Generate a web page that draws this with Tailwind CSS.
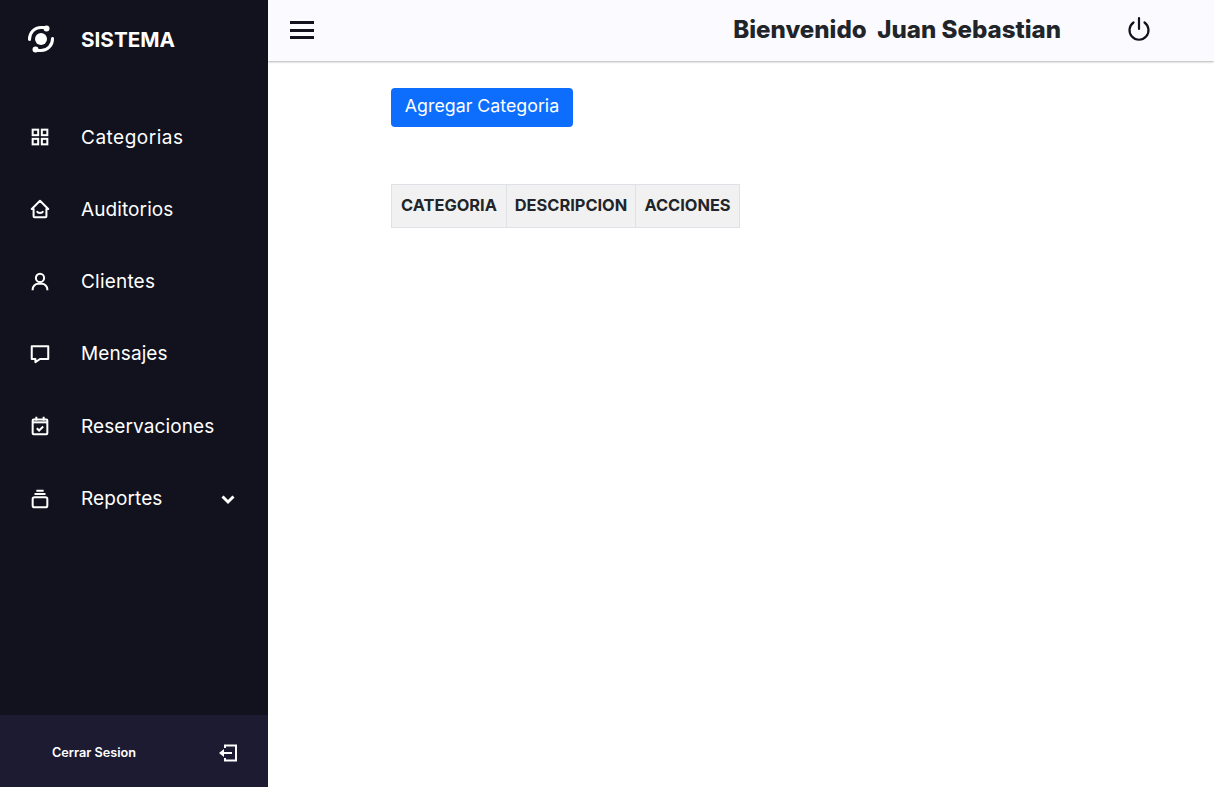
<!DOCTYPE html>
<html lang="en">

<head>
  <meta charset="UTF-8" />
  <title>Sistema</title>
  <script src="https://cdn.jsdelivr.net/npm/@tailwindcss/browser@4"></script>
</head>

<body class="bg-white font-['Inter',sans-serif]">
  <div class="flex h-[787px] w-[1214px] overflow-hidden">
    <!-- Sidebar -->
    <aside class="flex w-[268px] shrink-0 flex-col bg-[#11121d] text-white">
      <div class="flex h-[78px] items-center">
        <div class="flex w-[81px] justify-center">
          <svg class="h-[28px] w-[28px]" viewBox="0 0 28 28" fill="none" stroke="white" stroke-width="3" stroke-linecap="round">
            <circle cx="14" cy="14" r="6" fill="white" stroke="none" />
            <path d="M2.500 14.500A11.500 11.500 0 0 1 14 2.500h3" />
            <path d="M25.500 13.500A11.500 11.500 0 0 1 14 25.500h-3" />
            <circle cx="19.500" cy="3.500" r="3" fill="white" stroke="none" />
            <circle cx="8.500" cy="24.500" r="3" fill="white" stroke="none" />
          </svg>
        </div>
        <span class="pt-[2px] text-[20.700px] font-bold">SISTEMA</span>
      </div>

      <nav class="mt-[23px] flex flex-1 flex-col">
        <a href="#" class="flex h-[72.300px] items-center">
          <div class="flex w-[81px] justify-center pr-px">
            <svg class="h-[22px] w-[22px]" viewBox="0 0 24 24" fill="none" stroke="white" stroke-width="2.200">
              <rect x="4" y="4" width="6" height="6" />
              <rect x="14" y="4" width="6" height="6" />
              <rect x="4" y="14" width="6" height="6" />
              <rect x="14" y="14" width="6" height="6" />
            </svg>
          </div>
          <span class="pt-[3px] text-[19px] tracking-[0.5px]">Categorias</span>
        </a>
        <a href="#" class="flex h-[72.300px] items-center">
          <div class="flex w-[81px] justify-center pr-px">
            <svg class="h-[22px] w-[22px]" viewBox="0 0 24 24" fill="none" stroke="white" stroke-width="2.200" stroke-linejoin="round">
              <path d="M3 12l9-9 9 9h-2v8a1 1 0 0 1-1 1H6a1 1 0 0 1-1-1v-8z" />
              <path d="M8.500 14.500c1.500 2.500 5.500 2.500 7 0" />
            </svg>
          </div>
          <span class="pt-px text-[19px] tracking-[0.1px]">Auditorios</span>
        </a>
        <a href="#" class="flex h-[72.300px] items-center">
          <div class="flex w-[81px] justify-center pr-px">
            <svg class="h-[22px] w-[22px]" viewBox="0 0 24 24" fill="none" stroke="white" stroke-width="2.200">
              <circle cx="12" cy="7.500" r="4.500" />
              <path d="M4 21v-1a6 6 0 0 1 6-6h4a6 6 0 0 1 6 6v1" />
            </svg>
          </div>
          <span class="pt-px text-[19px] tracking-[0.2px]">Clientes</span>
        </a>
        <a href="#" class="flex h-[72.300px] items-center">
          <div class="flex w-[81px] justify-center pr-px">
            <svg class="h-[22px] w-[22px]" viewBox="0 0 24 24" fill="none" stroke="white" stroke-width="2.200" stroke-linejoin="round">
              <path d="M3 3.500h18v14h-9l-5 3.500v-3.500H3z" />
            </svg>
          </div>
          <span class="text-[19px] tracking-[0.1px]">Mensajes</span>
        </a>
        <a href="#" class="flex h-[72.300px] items-center">
          <div class="flex w-[81px] justify-center pr-px">
            <svg class="h-[22px] w-[22px]" viewBox="0 0 24 24" fill="none" stroke="white" stroke-width="2.200">
              <rect x="4" y="5" width="16" height="16" rx="1" />
              <path d="M8 2v4M16 2v4" />
              <path d="M4 8h16" />
              <path d="M8.500 14.500l2.500 2.500 4.500-4.500" />
            </svg>
          </div>
          <span class="pt-px text-[19px] tracking-[0.1px]">Reservaciones</span>
        </a>
        <a href="#" class="flex h-[72.300px] items-center">
          <div class="flex w-[81px] justify-center pr-px">
            <svg class="h-[22px] w-[22px]" viewBox="0 0 24 24" fill="none" stroke="white" stroke-width="2.200">
              <rect x="4" y="10" width="16" height="11" rx="2" />
              <path d="M6 6.500h12M8 3h8" />
            </svg>
          </div>
          <span class="pt-px text-[19px] tracking-[0.1px]">Reportes</span>
          <svg class="ml-auto mr-[31px] h-[18px] w-[18px]" viewBox="0 0 18 18" fill="none" stroke="white" stroke-width="3">
            <path d="M3.500 6.500L9 12l5.500-5.500" />
          </svg>
        </a>
      </nav>

      <!-- Footer -->
      <div class="flex h-[72px] items-center bg-[#1d1b31] pl-[52px] pr-[30px]">
        <span class="pt-[3px] text-[12.700px] font-semibold">Cerrar Sesion</span>
        <svg class="ml-auto mt-[3px] h-[20px] w-[20px]" viewBox="0 0 20 20" fill="none" stroke="white" stroke-width="2">
          <path d="M7 5V2.500h11v15H7V15" />
          <path d="M14 10H4" />
          <path d="M1 10l5-4v8z" fill="white" stroke="none" />
        </svg>
      </div>
    </aside>

    <div class="flex flex-1 flex-col">
      <!-- Header -->
      <header class="flex h-[61px] items-center bg-[#fbfaff] shadow-[0_1px_2px_rgba(0,0,0,0.3)]">
        <div class="mb-px ml-[21.500px] flex w-[24px] flex-col gap-[4.500px]">
          <span class="h-[3px] bg-[#11121d]"></span>
          <span class="h-[3px] bg-[#11121d]"></span>
          <span class="h-[3px] bg-[#11121d]"></span>
        </div>
        <h1 class="ml-auto text-[24.100px] font-extrabold text-[#212529]">Bienvenido&nbsp; Juan Sebastian</h1>
        <svg class="mb-[4px] ml-[65px] mr-[62px] h-[26px] w-[26px]" viewBox="0 0 26 26" fill="none" stroke="#11121d" stroke-width="2.200" stroke-linecap="round">
          <path d="M13 2v11" />
          <path d="M7.500 6.500a9.500 9.500 0 1 0 11 0" />
        </svg>
      </header>

      <!-- Content -->
      <main class="pl-[123px] pt-[27px]">
        <button class="flex h-[39px] w-[182px] items-center justify-center rounded-[4px] bg-[#0d6efd] pb-[2px] text-[17.800px] text-white">Agregar Categoria</button>
        <table class="mt-[57px] border-collapse text-[16.400px] font-extrabold text-[#212529]">
          <thead>
            <tr class="h-[43px] bg-[#f1f1f1]">
              <th class="w-[115px] border border-[#dee2e6] p-0 pb-[2px] text-center">CATEGORIA</th>
              <th class="w-[129px] border border-[#dee2e6] p-0 pb-[2px] text-center">DESCRIPCION</th>
              <th class="w-[104px] border border-[#dee2e6] p-0 pb-[2px] text-center">ACCIONES</th>
            </tr>
          </thead>
        </table>
      </main>
    </div>
  </div>
</body>

</html>
